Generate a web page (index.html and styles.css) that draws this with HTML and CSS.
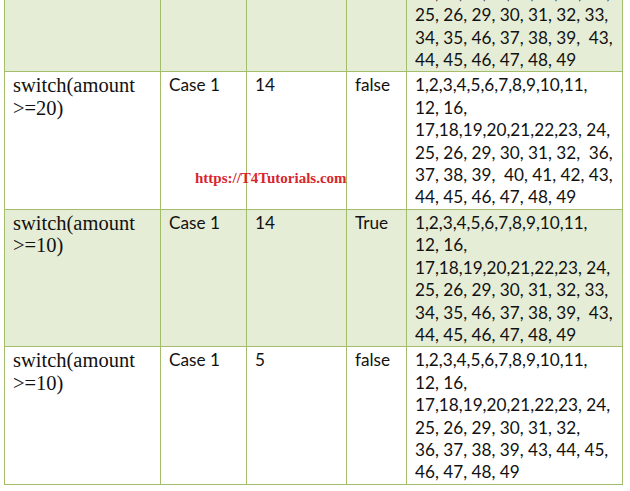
FILE: index.html
```html
<!DOCTYPE html>
<html lang="en">
<head>
<meta charset="utf-8">
<title>Switch test cases</title>
<link rel="stylesheet" href="styles.css">
</head>
<body>
<div class="frame">
  <table class="grid">
    <colgroup>
      <col class="c1"><col class="c2"><col class="c3"><col class="c4"><col class="c5">
    </colgroup>
    <tbody>
      <tr class="shade">
        <td class="expr">switch(amount<br>&gt;=20)</td>
        <td>Case 1</td>
        <td>20</td>
        <td>True</td>
        <td class="nums">1,2,3,4,5,6,7,8,9,10,11,<br>12, 16,<br>17,18,19,20,21,22,23, 24,<br>25, 26, 29, 30, 31, 32, 33,<br>34, 35, 46, 37, 38, 39,&nbsp; 43,<br>44, 45, 46, 47, 48, 49</td>
      </tr>
      <tr>
        <td class="expr">switch(amount<br>&gt;=20)</td>
        <td>Case 1</td>
        <td>14</td>
        <td>false</td>
        <td class="nums">1,2,3,4,5,6,7,8,9,10,11,<br>12, 16,<br>17,18,19,20,21,22,23, 24,<br>25, 26, 29, 30, 31, 32,&nbsp; 36,<br>37, 38, 39,&nbsp; 40, 41, 42, 43,<br>44, 45, 46, 47, 48, 49</td>
      </tr>
      <tr class="shade">
        <td class="expr">switch(amount<br>&gt;=10)</td>
        <td>Case 1</td>
        <td>14</td>
        <td>True</td>
        <td class="nums">1,2,3,4,5,6,7,8,9,10,11,<br>12, 16,<br>17,18,19,20,21,22,23, 24,<br>25, 26, 29, 30, 31, 32, 33,<br>34, 35, 46, 37, 38, 39,&nbsp; 43,<br>44, 45, 46, 47, 48, 49</td>
      </tr>
      <tr>
        <td class="expr">switch(amount<br>&gt;=10)</td>
        <td>Case 1</td>
        <td>5</td>
        <td>false</td>
        <td class="nums">1,2,3,4,5,6,7,8,9,10,11,<br>12, 16,<br>17,18,19,20,21,22,23, 24,<br>25, 26, 29, 30, 31, 32,<br>36, 37, 38, 39, 43, 44, 45,<br>46, 47, 48, 49</td>
      </tr>
    </tbody>
  </table>
  <div class="watermark">https://T4Tutorials.com</div>
</div>
</body>
</html>
```
FILE: styles.css
```css
html, body {
  margin: 0;
  padding: 0;
  background: #ffffff;
}

.frame {
  position: relative;
  width: 630px;
  height: 491px;
  overflow: hidden;
}

.grid {
  border-collapse: collapse;
  table-layout: fixed;
  width: 619px;
  margin: -66px 0 0 4px;
  font-family: "Lato", "Carlito", sans-serif;
  font-size: 17.2px;
  line-height: 22.4px;
  color: #111111;
}

.c1 { width: 156px; }
.c2 { width: 86px; }
.c3 { width: 100px; }
.c4 { width: 60px; }
.c5 { width: 216px; }

.grid td {
  border: 1px solid #a4bd6b;
  padding: 2px 7px 0 8px;
  height: 137px;
  box-sizing: border-box;
  vertical-align: top;
  background: #ffffff;
}

.grid tr.shade td {
  background: #e6edd6;
}

.grid td.expr {
  font-family: "Liberation Serif", "Times New Roman", serif;
  font-size: 20.5px;
}

.grid td.nums {
  white-space: nowrap;
}

.watermark {
  position: absolute;
  left: 195px;
  top: 170px;
  font-family: "Liberation Serif", "Times New Roman", serif;
  font-weight: bold;
  font-size: 15px;
  color: #d8262e;
}
```
